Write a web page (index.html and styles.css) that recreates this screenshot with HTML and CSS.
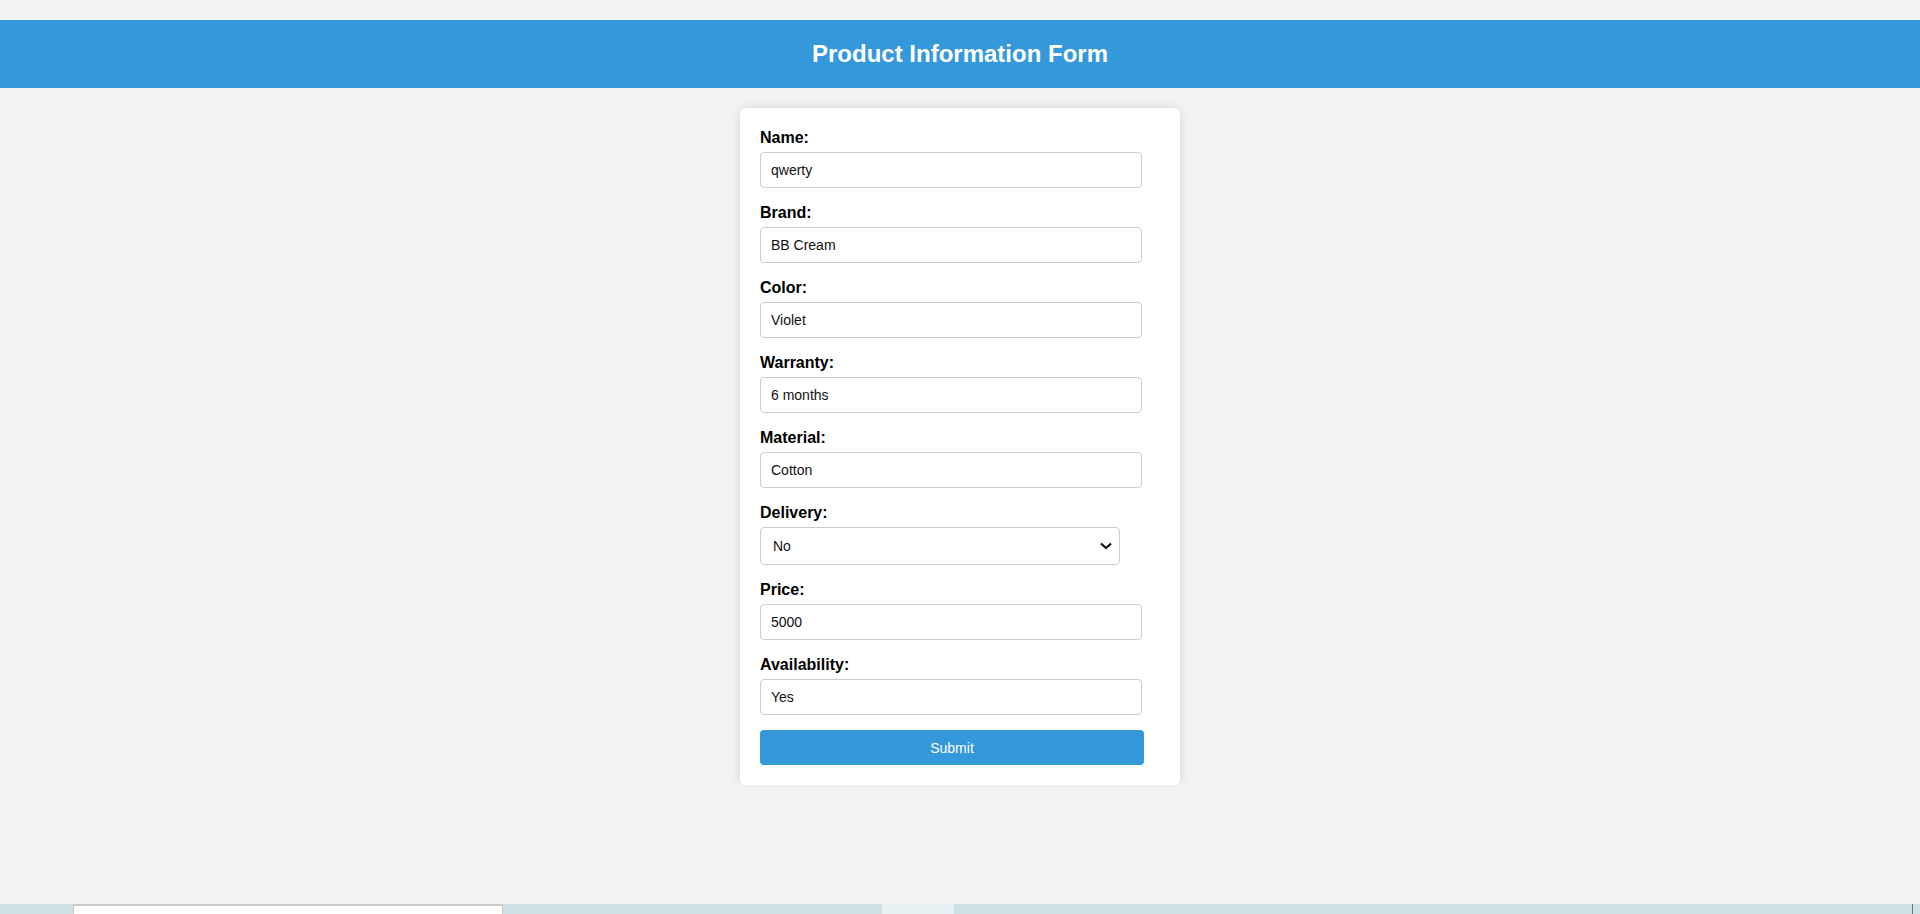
FILE: index.html
```html
<!DOCTYPE html>
<html lang="en">
<head>
<meta charset="utf-8">
<title>Product Information Form</title>
<link rel="stylesheet" href="styles.css">
</head>
<body>
<div class="page">
  <header class="topbar">
    <h1 class="title">Product Information Form</h1>
  </header>
  <form class="card">
    <label class="field-label" for="name">Name:</label>
    <input class="text-input" id="name" type="text" value="qwerty">
    <label class="field-label" for="brand">Brand:</label>
    <input class="text-input" id="brand" type="text" value="BB Cream">
    <label class="field-label" for="color">Color:</label>
    <input class="text-input" id="color" type="text" value="Violet">
    <label class="field-label" for="warranty">Warranty:</label>
    <input class="text-input" id="warranty" type="text" value="6 months">
    <label class="field-label" for="material">Material:</label>
    <input class="text-input" id="material" type="text" value="Cotton">
    <label class="field-label" for="delivery">Delivery:</label>
    <div class="select-wrap">
      <select class="select-input" id="delivery">
        <option>No</option>
        <option>Yes</option>
      </select>
      <svg class="chevron" width="12" height="8" viewBox="0 0 12 8"><path d="M1 1.5 L6 6 L11 1.5" fill="none" stroke="#111" stroke-width="2.2"/></svg>
    </div>
    <label class="field-label" for="price">Price:</label>
    <input class="text-input" id="price" type="text" value="5000">
    <label class="field-label" for="availability">Availability:</label>
    <input class="text-input" id="availability" type="text" value="Yes">
    <button class="submit" type="button">Submit</button>
  </form>
</div>
<div class="taskbar">
  <div class="tb-seg tb-a"></div>
  <div class="tb-seg tb-window"></div>
  <div class="tb-seg tb-b"></div>
  <div class="tb-seg tb-light"></div>
  <div class="tb-seg tb-c"></div>
  <div class="tb-seg tb-edge"></div>
  <div class="tb-seg tb-d"></div>
</div>
</body>
</html>
```
FILE: styles.css
```css
* { box-sizing: border-box; }
html, body {
  margin: 0;
  padding: 0;
  background: #f2f2f2;
  font-family: "Liberation Sans", Arial, sans-serif;
}
.page {
  padding-top: 20px;
}
.topbar {
  background: #3498db;
  padding: 20px 0;
}
.title {
  margin: 0;
  color: #fff;
  font-size: 24px;
  line-height: 28px;
  font-weight: bold;
  text-align: center;
}
.card {
  width: 440px;
  margin: 20px auto 0;
  background: #fff;
  padding: 20px;
  border-radius: 5px;
  box-shadow: 0 0 10px rgba(0, 0, 0, 0.12);
  display: flex;
  flex-direction: column;
  align-items: flex-start;
}
.field-label {
  display: block;
  font-size: 16px;
  line-height: 19px;
  font-weight: bold;
  color: #000;
  margin-bottom: 5px;
}
.text-input {
  width: 382px;
  height: 36px;
  margin: 0 0 15px;
  padding: 0 10px;
  border: 1px solid #ccc;
  border-radius: 4px;
  font-family: "Liberation Sans", Arial, sans-serif;
  font-size: 14px;
  color: #111;
  background: #fff;
  outline: none;
}
.select-wrap {
  position: relative;
  width: 360px;
  height: 38px;
  margin-bottom: 15px;
}
.select-input {
  appearance: none;
  -webkit-appearance: none;
  width: 100%;
  height: 100%;
  margin: 0;
  padding: 0 12px;
  border: 1px solid #ccc;
  border-radius: 4px;
  background: #fff;
  font-family: "Liberation Sans", Arial, sans-serif;
  font-size: 14px;
  color: #111;
  outline: none;
}
.chevron {
  position: absolute;
  right: 8px;
  top: 15px;
  pointer-events: none;
}
.submit {
  width: 384px;
  height: 35px;
  margin: 0;
  border: none;
  border-radius: 4px;
  background: #3498db;
  color: #fff;
  font-family: "Liberation Sans", Arial, sans-serif;
  font-size: 14px;
  cursor: pointer;
}
.taskbar {
  position: fixed;
  left: 0;
  right: 0;
  bottom: 0;
  height: 10px;
  display: flex;
  background: #cfe0e5;
}
.tb-seg { height: 100%; }
.tb-a { width: 73px; }
.tb-window {
  width: 430px;
  background: #fff;
  border-top: 2px solid #c9c9c9;
  border-left: 1px solid #c9c9c9;
  border-right: 1px solid #c9c9c9;
}
.tb-b { width: 379px; }
.tb-light { width: 72px; background: #e6eff1; }
.tb-c { width: 958px; }
.tb-edge { width: 1px; background: #777; }
.tb-d { flex: 1; }
```
